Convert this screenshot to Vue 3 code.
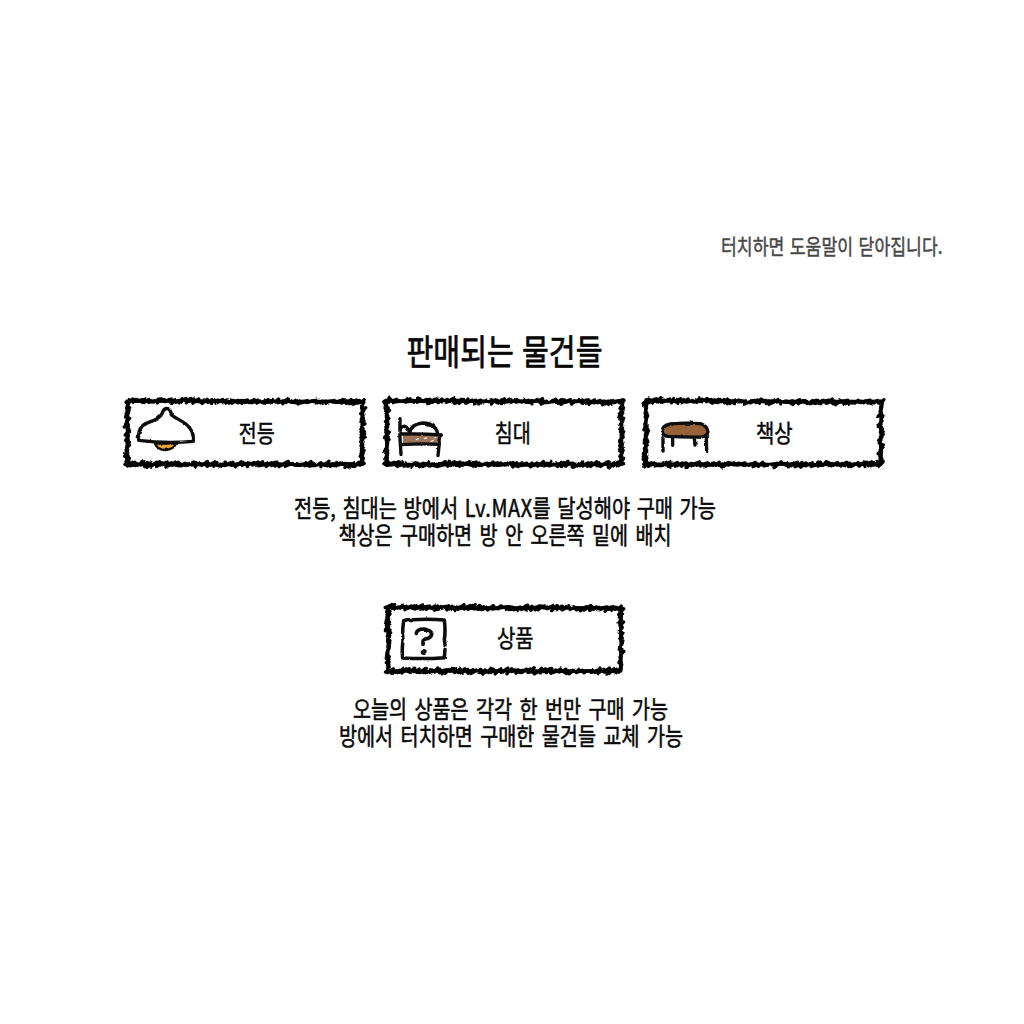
<script setup>
const hint = { text: '터치하면 도움말이 닫아집니다.', x: 721, y: 31, length: 221.5, size: 21 }
const title = { text: '판매되는 물건들', x: 406.5, y: 50, length: 196, size: 35.5 }
const goodsNotes = [
  { parts: ['전등, 침대는 방에서 ', 'Lv.MAX', '를 달성해야 구매 가능'], x: 294, y: 32, length: 422 },
  { parts: ['책상은 구매하면 방 안 오른쪽 밑에 배치'], x: 338.5, y: 59, length: 333 }
]
const prizeNotes = [
  { parts: ['오늘의 상품은 각각 한 번만 구매 가능'], x: 353, y: 27.5, length: 315 },
  { parts: ['방에서 터치하면 구매한 물건들 교체 가능'], x: 339, y: 54.5, length: 344 }
]
const goods = [
  { id: 'lamp', name: '전등', x: 371, length: 108, frame: [37, 34, 743, 223] },
  { id: 'bed', name: '침대', x: 359, length: 108, frame: [35, 34, 740, 223] },
  { id: 'table', name: '책상', x: 363, length: 110, frame: [33, 34, 738, 223] }
]
const prize = { id: 'prize', name: '상품', x: 366, length: 110, frame: [39, 38, 738, 228] }
const rows = [goods, [prize]]

// Crayon outline: a ribbon of short slanted dabs with a repeatable wobble.
function crayon([x1, y1, x2, y2], seed) {
  let s = seed
  const rnd = () => {
    s = (s * 16807) % 2147483647
    return s / 2147483647 - 0.5
  }
  for (let i = 0; i < 5; i++) rnd()
  let d = ''
  for (let x = x1; x <= x2; x += 8) {
    for (const y of [y1, y2]) {
      const h = 3.5 + rnd() * 6
      const c = y + rnd() * 7 + (y === y1 ? (x - x1) / 180 - 2 : 0)
      const t = 6 + rnd() * 6
      d += `M${(x - t).toFixed(1)} ${(c + h).toFixed(1)}L${(x + t).toFixed(1)} ${(c - h).toFixed(1)}`
    }
  }
  for (let y = y1; y <= y2; y += 8) {
    for (const x of [x1, x2]) {
      const w = 3 + rnd() * 5
      const c = x + rnd() * 8
      d += `M${(c - w).toFixed(1)} ${(y + 5).toFixed(1)}L${(c + w).toFixed(1)} ${(y - 5).toFixed(1)}`
    }
  }
  return d
}
</script>

<template>
  <main class="help">
    <svg class="hint" viewBox="0 0 1024 52">
      <text :x="hint.x" :y="hint.y" :textLength="hint.length" lengthAdjust="spacingAndGlyphs" :font-size="hint.size">{{ hint.text }}</text>
    </svg>
    <svg class="title" viewBox="0 0 1024 75">
      <text :x="title.x" :y="title.y" :textLength="title.length" lengthAdjust="spacingAndGlyphs" :font-size="title.size">{{ title.text }}</text>
    </svg>
    <template v-for="(row, r) in rows" :key="r">
      <section class="row">
        <svg v-for="(item, i) in row" :key="item.id" class="card" viewBox="0 0 780 255">
          <path class="frame" :d="crayon(item.frame, 4711 + i * 97 + r * 991)" />
          <rect class="core" :x="item.frame[0]" :y="item.frame[1]" :width="item.frame[2] - item.frame[0]" :height="item.frame[3] - item.frame[1]" />

          <g v-if="item.id === 'lamp'" class="ink">
            <path d="M120 161Q128 179 151 180Q175 178 183 161Z" fill="#eda52d" stroke-width="7" />
            <path d="M71 151C68 125 77 106 99 98C123 89 139 82 144 64Q149 54 158 56Q167 59 169 74C184 88 210 93 224 114Q237 130 235 154Q151 161 71 151Z" fill="#fff" />
            <path d="M134 168L148 168M155 171L166 166" stroke="#eda52d" stroke-width="6" />
          </g>

          <g v-else-if="item.id === 'bed'" class="ink">
            <path d="M84 135H192V164H84Z" fill="#9a7358" stroke="none" />
            <path d="M124 149l6-3M148 146l7-2M168 155l7-4M178 144l5-2" stroke="#e8ddd4" stroke-width="4" />
            <path d="M75 86Q73 141 78 193M80 112Q91 103 99 117L106 130M104 128Q109 102 144 99Q180 99 188 130M78 132Q138 130 199 135M82 164Q137 160 191 163M198 136Q190 145 193 161L189 197" stroke-width="10" />
          </g>

          <g v-else-if="item.id === 'table'" class="ink">
            <path d="M84 142L84 183M113 146V166M178 146L180 165M214 142L215 185" stroke-width="10" />
            <path d="M82 128Q78 108 106 102Q151 97 196 101Q216 107 219 126Q216 139 199 141Q151 142 98 139Q84 137 82 128Z" fill="#986239" />
          </g>

          <g v-else class="ink">
            <path d="M86 77Q101 72 114 74Q162 71 208 75Q212 112 208 133L210 149M210 163L208 188Q149 193 83 189Q80 165 84 137Q81 111 86 77" stroke-width="10.5" />
            <path d="M124 115Q126 102 147 102Q169 104 170 118Q168 129 151 132Q143 136 144 148" stroke-width="11" />
            <circle cx="146" cy="171" r="4" />
          </g>

          <text :x="item.x" y="156" :textLength="item.length" lengthAdjust="spacingAndGlyphs" font-size="71" class="name">{{ item.name }}</text>
        </svg>
      </section>
      <svg class="notes" viewBox="0 0 1024 80">
        <text v-for="line in r ? prizeNotes : goodsNotes" :key="line.x" :class="{ mixed: line.parts.length > 1 }" :x="line.x" :y="line.y" :textLength="line.length" lengthAdjust="spacingAndGlyphs" font-size="24"><tspan v-for="(part, p) in line.parts" :key="p" :class="{ latin: p === 1 }">{{ part }}</tspan></text>
      </svg>
    </template>
    <svg width="0" height="0" class="defs">
      <filter id="rough" x="-5%" y="-10%" width="110%" height="120%">
        <feTurbulence type="fractalNoise" baseFrequency="0.06" numOctaves="2" seed="8" result="grain" />
        <feDisplacementMap in="SourceGraphic" in2="grain" scale="7" xChannelSelector="R" yChannelSelector="G" />
        <feGaussianBlur stdDeviation="1.3" />
      </filter>
    </svg>
  </main>
</template>

<style>
body {
  background: #fff;
}
</style>

<style scoped>
.help {
  box-sizing: border-box;
  width: 1024px;
  height: 1024px;
  padding-top: 223px;
  display: flex;
  flex-direction: column;
  background: #fff;
  overflow: hidden;
}
.help > svg {
  display: block;
  width: 1024px;
  flex: none;
  overflow: visible;
}
text {
  font-family: "Noto Sans CJK KR", "Noto Sans", sans-serif;
  fill: #080808;
  stroke: #080808;
  stroke-width: 0.55px;
  word-spacing: 3.7px;
}
.mixed {
  word-spacing: 2.6px;
}
.latin {
  letter-spacing: 0.7px;
}
.hint {
  height: 52px;
}
.hint text {
  fill: #484848;
  stroke: #484848;
  word-spacing: 2px;
  stroke-width: 0.5px;
}
.title {
  height: 75px;
  margin: 40px 0 0;
}
.title text {
  word-spacing: 2px;
  stroke-width: 0.75px;
}
.row {
  display: flex;
  justify-content: center;
  height: 85px;
  width: 780px;
  margin-left: 115px;
}
.card {
  width: 260px;
  height: 85px;
  flex: none;
}
.help > .notes {
  height: 80px;
  margin: 10px 0 30px;
}
.frame {
  fill: none;
  stroke: #050505;
  stroke-width: 10;
  stroke-linecap: round;
  filter: url(#rough);
}
.core {
  fill: none;
  stroke: #050505;
  stroke-width: 9;
  stroke-linejoin: round;
  filter: url(#rough);
}
.ink {
  fill: none;
  stroke: #080808;
  stroke-width: 10;
  stroke-linecap: round;
  stroke-linejoin: round;
  filter: url(#rough);
}
.name {
  stroke-width: 1.6px;
  word-spacing: 0;
}
.help > .defs {
  width: 0;
  height: 0;
}
</style>
